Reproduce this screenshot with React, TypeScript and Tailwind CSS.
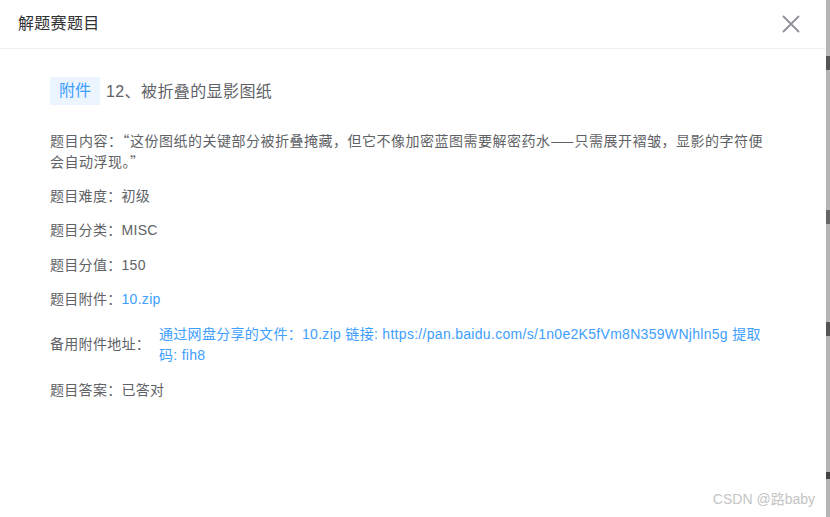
import React from "react";

const font = { fontFamily: '"Liberation Sans", "Noto Sans CJK SC", sans-serif' };
const cjkFirst = { fontFamily: '"Noto Sans CJK SC", "Liberation Sans", sans-serif' };

function Row({ label, children }: { label: string; children: React.ReactNode }) {
  return (
    <div className="flex leading-[21px] text-[14px] text-[#606266] tracking-[0.3px]">
      <span className="shrink-0">{label}</span>
      <span>{children}</span>
    </div>
  );
}

export default function App() {
  return (
    <div className="flex w-[830px] h-[517px] bg-white overflow-hidden" style={font}>
      <div className="relative flex flex-col w-[826px] h-full bg-white">
        <div className="flex items-center justify-between h-[49px] border-b border-[#f0f0f0] pl-[18px] pr-[26px]">
          <span className="text-[16px] text-[#303133] leading-[22px] tracking-[0.3px]">解题赛题目</span>
          <svg width="18" height="18" viewBox="0 0 18 18" className="mt-[-1px]">
            <path d="M1.5 1.5 L16.5 16.5 M16.5 1.5 L1.5 16.5" stroke="#909399" strokeWidth="1.9" strokeLinecap="round" />
          </svg>
        </div>
        <div className="flex flex-col pl-[50px] pr-[56px] pt-[28px]">
          <div className="flex items-center gap-[6px]">
            <span className="flex items-center h-[28px] px-[9px] bg-[#ecf5ff] text-[#409eff] text-[16px]">附件</span>
            <span className="text-[16px] text-[#606266] tracking-[0.4px] mt-[2px]">12、被折叠的显影图纸</span>
          </div>
          <div className="flex flex-col gap-[13.5px] mt-[25px]">
            <div className="leading-[21px] text-[14px] text-[#606266] w-[720px] tracking-[0.5px]" style={cjkFirst}>
              题目内容：“这份图纸的关键部分被折叠掩藏，但它不像加密蓝图需要解密药水——只需展开褶皱，显影的字符便会自动浮现。”
            </div>
            <Row label="题目难度：">初级</Row>
            <Row label="题目分类：">MISC</Row>
            <Row label="题目分值：">150</Row>
            <Row label="题目附件：">
              <span className="text-[#409eff]">10.zip</span>
            </Row>
            <div className="flex items-center leading-[21.5px] text-[14px] tracking-[0.3px]">
              <span className="shrink-0 w-[109px] text-[#606266]">备用附件地址：</span>
              <span className="text-[#409eff] w-[610px]">
                通过网盘分享的文件：10.zip 链接: https://pan.baidu.com/s/1n0e2K5fVm8N359WNjhln5g 提取码: fih8
              </span>
            </div>
            <Row label="题目答案：">已答对</Row>
          </div>
        </div>
        <div className="mt-auto flex justify-end pr-[11px] pb-[8px]">
          <span className="text-[14px] text-[#c4c4c4] leading-[20px]">CSDN @路baby</span>
        </div>
      </div>
      <div className="flex flex-col w-[4px] h-full bg-[#b5b5b5]">
        <div className="h-[56px]" />
        <div className="h-[14px] bg-[#555]" />
        <div className="h-[140px]" />
        <div className="h-[14px] bg-[#666]" />
        <div className="h-[98px]" />
        <div className="h-[14px] bg-[#555]" />
        <div className="h-[136px]" />
        <div className="h-[7px] bg-[#444]" />
      </div>
    </div>
  );
}
